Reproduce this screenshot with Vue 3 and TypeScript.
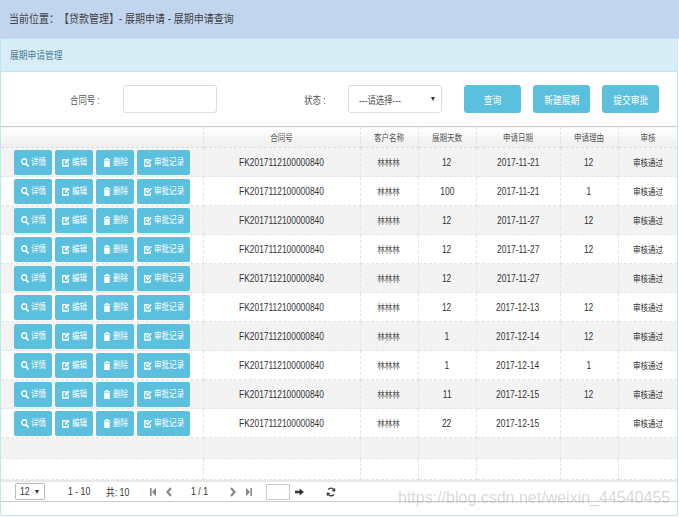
<script setup lang="ts">
interface Row { days: string; date: string; reason: string }
const rows: Row[] = [
  { days: '12', date: '2017-11-21', reason: '12' },
  { days: '100', date: '2017-11-21', reason: '1' },
  { days: '12', date: '2017-11-27', reason: '12' },
  { days: '12', date: '2017-11-27', reason: '12' },
  { days: '12', date: '2017-11-27', reason: '' },
  { days: '12', date: '2017-12-13', reason: '12' },
  { days: '1', date: '2017-12-14', reason: '12' },
  { days: '1', date: '2017-12-14', reason: '1' },
  { days: '11', date: '2017-12-15', reason: '12' },
  { days: '22', date: '2017-12-15', reason: '' },
]
const headers = ['合同号', '客户名称', '展期天数', '申请日期', '申请理由', '审核']
</script>

<template>
  <div class="page">
    <div class="crumb"><span class="sl">当前位置：【贷款管理】- 展期申请 - 展期申请查询</span></div>
    <section class="panel">
      <div class="heading"><span class="sl">展期申请管理</span></div>
      <form class="form" @submit.prevent>
        <label class="label first"><span class="sl">合同号 :</span></label>
        <input class="field" type="text" />
        <label class="label second"><span class="sl">状态 :</span></label>
        <div class="field select"><span class="sl">---请选择---</span><i class="tri"></i></div>
        <button class="btn b1"><span class="sq">查询</span></button>
        <button class="btn b2"><span class="sq">新建展期</span></button>
        <button class="btn b3"><span class="sq">提交审批</span></button>
      </form>
      <table class="grid">
        <colgroup>
          <col style="width: 202px" /><col style="width: 157px" /><col style="width: 58px" />
          <col style="width: 58px" /><col style="width: 84px" /><col style="width: 58px" /><col />
        </colgroup>
        <thead>
          <tr>
            <th></th>
            <th v-for="h in headers" :key="h"><span class="sq">{{ h }}</span></th>
          </tr>
        </thead>
        <tbody>
          <tr v-for="(r, i) in rows" :key="i" class="data">
            <td class="ops">
              <div class="ops-in">
                <a class="op w38">
                  <svg viewBox="0 0 11 11" preserveAspectRatio="none"><circle cx="4.4" cy="4.4" r="3.4" fill="none" stroke="currentColor" stroke-width="1.8" /><path d="M6.8 6.8 10.4 10.4" stroke="currentColor" stroke-width="2.2" /></svg><span class="sl t2">详情</span>
                </a>
                <a class="op w38">
                  <svg viewBox="0 0 11 11" preserveAspectRatio="none"><path d="M8.7 6v3.8H1V2.2h5" fill="none" stroke="currentColor" stroke-width="1.7" /><path d="M4 5 8.5.5l2 2L6 7H4z" fill="currentColor" /></svg><span class="sl t2">编辑</span>
                </a>
                <a class="op w38">
                  <svg viewBox="0 0 11 11" preserveAspectRatio="none"><path d="M1 1.4h9v1.3H1zM3.8 0h3.4v1.2H3.8zM1.7 3.4h7.6V11H1.7z" fill="currentColor" /></svg><span class="sl t2">删除</span>
                </a>
                <a class="op w53">
                  <svg viewBox="0 0 11 11" preserveAspectRatio="none"><path d="M8.7 6.5v3.3H1V2.2h6" fill="none" stroke="currentColor" stroke-width="1.7" /><path d="M3 4.4l2.2 2.2L10 1.8" fill="none" stroke="currentColor" stroke-width="1.9" /></svg><span class="sl t4">审批记录</span>
                </a>
              </div>
            </td>
            <td class="cell"><span class="sq">FK2017112100000840</span></td>
            <td class="cell cjk name"><span class="sq">林林林</span></td>
            <td class="cell"><span class="sq">{{ r.days }}</span></td>
            <td class="cell"><span class="sq">{{ r.date }}</span></td>
            <td class="cell"><span class="sq">{{ r.reason }}</span></td>
            <td class="cell cjk"><span class="sq">审核通过</span></td>
          </tr>
          <tr class="blank tall"><td v-for="n in 7" :key="n"></td></tr>
          <tr class="blank"><td v-for="n in 7" :key="n"></td></tr>
        </tbody>
      </table>
      <div class="pager">
        <div class="psel"><span class="sl">12</span><i class="tri"></i></div>
        <span class="p-range"><span class="sl">1 - 10</span></span>
        <span class="p-total"><span class="sl">共: 10</span></span>
        <svg class="pi p-first" viewBox="0 0 6 10"><path d="M0 1h1.6v8H0zM6 .8v8.4L2 5z" fill="#888" /></svg>
        <svg class="pi p-prev" viewBox="0 0 6 10"><path d="M5 1 1.5 5 5 9" fill="none" stroke="#888" stroke-width="2.2" /></svg>
        <span class="p-page"><span class="sl">1 / 1</span></span>
        <svg class="pi p-next" viewBox="0 0 6 10"><path d="M1 1l3.5 4L1 9" fill="none" stroke="#888" stroke-width="2.2" /></svg>
        <svg class="pi p-last" viewBox="0 0 6 10"><path d="M0 .8v8.4L4 5zM4.4 1H6v8H4.4z" fill="#888" /></svg>
        <input class="p-input" type="text" />
        <svg class="p-go" viewBox="0 0 9 8"><path d="M0 2.8h4.6V0.4L9 4 4.6 7.6V5.2H0z" fill="#333" /></svg>
        <svg class="p-refresh" viewBox="0 0 12 12"><path d="M10.5 5A4.6 4.6 0 0 0 2.6 3M1.5 7a4.6 4.6 0 0 0 7.9 2" fill="none" stroke="#333" stroke-width="1.6" /><path d="M11 1v4.2H6.8zM1 11V6.8h4.2z" fill="#333" /></svg>
      </div>
      <div class="mark">https://blog.csdn.net/weixin_44540455</div>
    </section>
  </div>
</template>

<style scoped>
.page {
  position: relative;
  width: 679px;
  height: 517px;
  background: #fff;
  font-family: "Liberation Sans", "Noto Sans CJK SC", sans-serif;
  color: #555;
  overflow: hidden;
  text-spacing-trim: space-all;
}
.sq, .sl {
  display: inline-block;
  white-space: nowrap;
  transform: scaleX(0.84);
}
.sl { transform-origin: left center; }
.crumb {
  height: 38px;
  box-sizing: border-box;
  padding-left: 9px;
  line-height: 38px;
  font-size: 11.9px;
  background: #c1d5ef;
  color: #444;
}
.panel {
  height: 478px;
  width: 678px;
  box-sizing: border-box;
  border: 1px solid #bce8f1;
  border-radius: 0 0 3px 3px;
  border-top-color: #bde3f0;
}
.heading {
  height: 33px;
  box-sizing: border-box;
  padding-left: 9px;
  line-height: 33px;
  font-size: 10.4px;
  background: #d9edf7;
  color: #4d7f99;
  border-bottom: 1px solid #bce8f1;
}
.form {
  display: flex;
  align-items: center;
  height: 54px;
  box-sizing: border-box;
  font-size: 10px;
}
.label { color: #555; white-space: nowrap; }
.first { margin-left: 69px; width: 53px; }
.second { margin-left: 87px; width: 44px; }
.field {
  width: 94px;
  height: 28px;
  box-sizing: border-box;
  padding: 0;
  border: 1px solid #ddd;
  border-radius: 3px;
  background: #fff;
  outline: none;
}
.select {
  display: flex;
  align-items: center;
  justify-content: space-between;
  padding: 0 6px 0 10px;
  color: #555;
}
.select .sl { width: 43px; }
.tri {
  width: 0;
  height: 0;
  border-left: 2.5px solid transparent;
  border-right: 2.5px solid transparent;
  border-top: 4px solid #333;
}
.btn {
  width: 57px;
  height: 28px;
  padding: 0;
  border: 1px solid #58bfe0;
  border-radius: 3px;
  background: #5bc0de;
  color: #fff;
  font: inherit;
  font-size: 10.4px;
}
.b1 { margin-left: 22px; }
.b2 { margin-left: 12px; }
.b3 { margin-left: 12px; }
.grid {
  width: 676px;
  table-layout: fixed;
  border-collapse: collapse;
  border-top: 1px solid #ccc;
  color: #333;
}
th {
  height: 20px;
  padding: 0;
  font-size: 9px;
  font-weight: 400;
  color: #555;
  background: linear-gradient(#fff, #eee);
  border-right: 1px dashed #e4e4e4;
  border-bottom: 1px dashed #ddd;
}
td {
  padding: 0;
  line-height: 1;
  text-align: center;
  border-right: 1px dashed #e4e4e4;
  border-bottom: 1px dashed #e4e4e4;
  white-space: nowrap;
}
th:last-child, td:last-child { border-right: 0; }
.data { height: 29px; }
.data:nth-child(odd), .tall { background: #f3f3f3; }
.tall { height: 22px; }
.blank { height: 21px; }
.cell { padding-top: 2px; font-size: 10px; color: #333; }
.cjk { font-size: 9px; }
.name { color: #555; }
.ops { text-align: left; }
.ops-in {
  display: flex;
  gap: 3px;
  padding-left: 13px;
}
.op {
  display: flex;
  align-items: center;
  justify-content: center;
  gap: 2px;
  height: 25px;
  border-radius: 2px;
  background: #5bc0de;
  color: #fff;
  font-size: 9px;
}
.op svg { width: 8px; height: 9px; flex: none; }
.t2 { width: 15px; }
.t4 { width: 30px; }
.w38 { width: 38px; }
.w53 { width: 53px; }
.pager {
  display: flex;
  align-items: center;
  height: 22px;
  box-sizing: border-box;
  border-top: 2px solid #e8e8e8;
  border-bottom: 1px solid #ccc;
  font-size: 10.4px;
  color: #333;
}
.psel {
  display: flex;
  align-items: center;
  justify-content: space-between;
  width: 30px;
  height: 17px;
  box-sizing: border-box;
  margin-left: 14px;
  padding: 0 5px 0 4px;
  border: 1px solid #bbb;
  border-radius: 2px;
}
.psel .sl { width: 10px; }
.p-range { margin-left: 23px; width: 38px; }
.p-total { width: 44px; }
.pi { width: 6px; height: 10px; flex: none; }
.p-prev { margin-left: 10px; }
.p-page { margin-left: 19px; width: 39px; }
.p-last { margin-left: 10px; }
.p-input {
  width: 24px;
  height: 16px;
  box-sizing: border-box;
  margin-left: 14px;
  border: 1px solid #ccc;
  padding: 0;
  outline: none;
}
.p-go { width: 9px; height: 8px; margin-left: 5px; }
.p-refresh { width: 10px; height: 10px; margin-left: 22px; }
.mark {
  position: absolute;
  left: 398px;
  top: 489px;
  font-size: 16px;
  line-height: 18px;
  white-space: nowrap;
  color: rgba(120, 120, 120, 0.3);
}
</style>
